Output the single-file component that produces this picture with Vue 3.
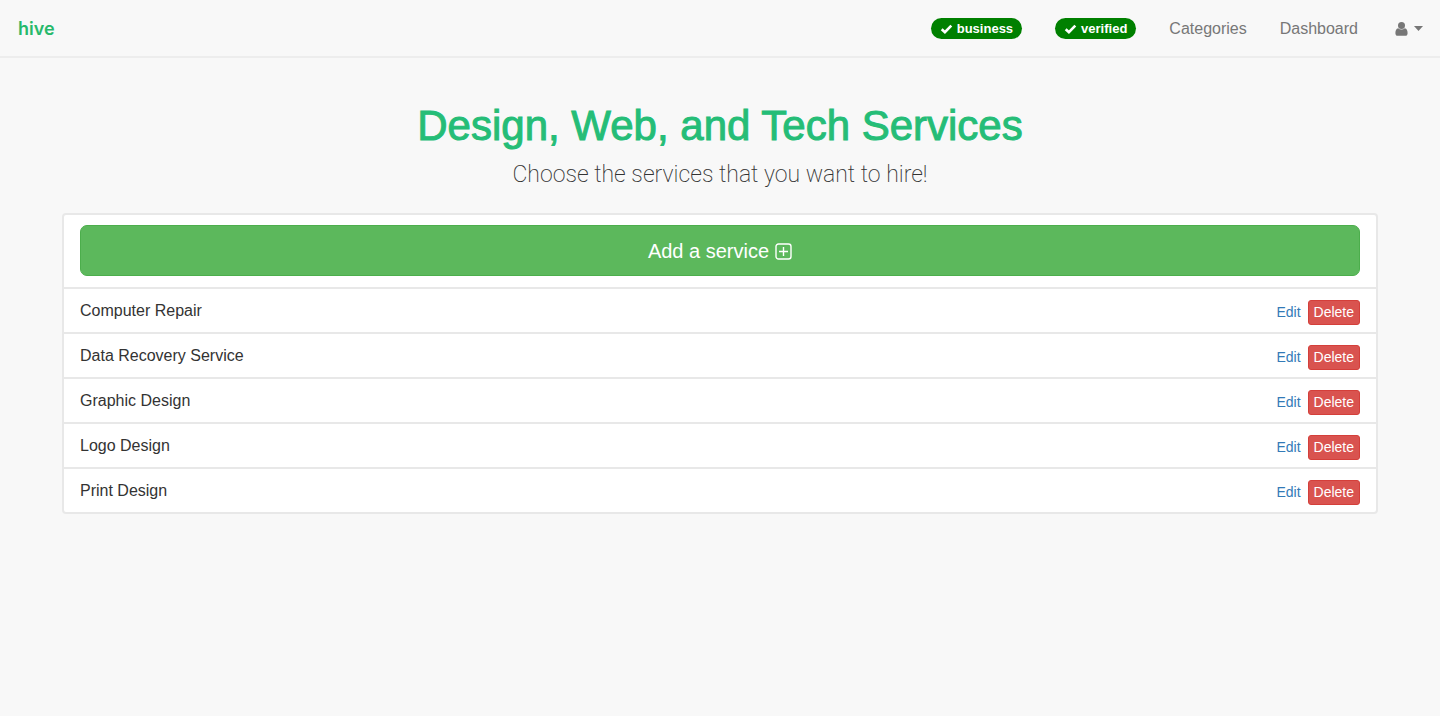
<script setup>
const badges = ['business', 'verified']
const services = [
  'Computer Repair',
  'Data Recovery Service',
  'Graphic Design',
  'Logo Design',
  'Print Design',
]
</script>

<template>
  <div class="page">
    <nav class="navbar">
      <a href="#" class="brand">hive</a>
      <div class="nav-items">
        <span v-for="badge in badges" :key="badge" class="badge">
          <svg class="check" viewBox="0 0 12 10" aria-hidden="true">
            <path d="M1.2 5.2 4.4 8.2 10.8 1.6" fill="none" stroke="currentColor" stroke-width="2.6" />
          </svg>
          {{ badge }}
        </span>
        <a href="#" class="nav-link">Categories</a>
        <a href="#" class="nav-link">Dashboard</a>
        <button type="button" class="user" aria-label="Account menu">
          <svg class="person" viewBox="0 0 13 14" aria-hidden="true">
            <path
              fill="currentColor"
              d="M3.2 6.2C1.1 6.6.4 8.5.4 11.2.4 12.9 1.3 13.8 2.7 13.8H10.3C11.7 13.8 12.6 12.9 12.6 11.2 12.6 8.5 11.9 6.6 9.8 6.2A4.6 4.6 0 0 1 3.2 6.2Z"
            />
            <circle cx="6.5" cy="3.6" r="3.5" fill="currentColor" />
          </svg>
          <svg class="caret" viewBox="0 0 9 5" aria-hidden="true">
            <path d="M0 0H9L4.5 5Z" fill="currentColor" />
          </svg>
        </button>
      </div>
    </nav>

    <main class="content">
      <h1 class="title">Design, Web, and Tech Services</h1>
      <p class="subtitle">Choose the services that you want to hire!</p>

      <ul class="list">
        <li class="add-row">
          <button type="button" class="add">
            Add a service
            <svg class="plus" viewBox="0 0 17 17" aria-hidden="true">
              <rect x="1" y="1" width="15" height="15" rx="2.5" fill="none" stroke="currentColor" stroke-width="1.4" />
              <path d="M8.5 4V13M4 8.5H13" stroke="currentColor" stroke-width="1.4" />
            </svg>
          </button>
        </li>
        <li v-for="service in services" :key="service" class="row">
          <span class="name">{{ service }}</span>
          <span class="actions">
            <a href="#" class="edit">Edit</a>
            <button type="button" class="delete">Delete</button>
          </span>
        </li>
      </ul>
    </main>
  </div>
</template>

<style>
body {
  background: #f8f8f8;
}
</style>

<style scoped>
.page {
  font-family: "Liberation Sans", Arial, sans-serif;
  font-size: 16px;
  line-height: 24px;
  color: #333;
}

button {
  font-family: inherit;
  border: 0;
  cursor: pointer;
}

a {
  text-decoration: none;
}

.navbar {
  display: flex;
  align-items: center;
  justify-content: space-between;
  height: 55px;
  padding: 1px 17px 0 18px;
  border-bottom: 2px solid #ededed;
}

.brand {
  font-family: Inter, sans-serif;
  font-size: 18px;
  font-weight: 600;
  color: #27b96b;
}

.nav-items {
  display: flex;
  align-items: center;
  gap: 33px;
}

.badge {
  display: flex;
  align-items: center;
  gap: 4px;
  height: 21px;
  padding: 0 9px;
  border-radius: 11px;
  background: #008000;
  color: #fff;
  font-size: 13px;
  font-weight: 700;
}

.check {
  width: 13px;
  height: 10px;
}

.nav-link {
  color: #777;
}

.user {
  display: flex;
  align-items: center;
  gap: 6px;
  margin-left: 4px;
  padding: 0;
  background: none;
  color: #777;
}

.person {
  width: 13px;
  height: 14px;
}

.caret {
  width: 9px;
  height: 5px;
}

.content {
  padding: 44px 62px;
}

.title {
  margin: 0;
  font-size: 42px;
  line-height: 48px;
  font-weight: 400;
  color: #25bd77;
  -webkit-text-stroke: 1px #25bd77;
  text-align: center;
}

.subtitle {
  margin: 9px 0 0;
  font-family: Roboto, "Liberation Sans", sans-serif;
  font-size: 23px;
  line-height: 32px;
  font-weight: 200;
  text-align: center;
}

.list {
  margin: 22px 0 0;
  padding: 0;
  list-style: none;
  background: #fff;
  border: 2px solid #e8e8e8;
  border-radius: 4px;
}

.add-row {
  padding: 10px 16px 11px;
}

.add {
  display: flex;
  align-items: center;
  justify-content: center;
  gap: 6px;
  width: 100%;
  height: 51px;
  padding: 1px 0 0;
  border: 1px solid #4cae4c;
  border-radius: 7px;
  background: #5cb85c;
  color: #fff;
  font-size: 20px;
}

.plus {
  width: 17px;
  height: 17px;
}

.row {
  display: flex;
  align-items: center;
  justify-content: space-between;
  height: 43px;
  padding: 0 16px;
  border-top: 2px solid #e8e8e8;
}

.actions {
  display: flex;
  align-items: center;
  gap: 7px;
  padding-top: 3px;
  font-size: 14px;
}

.edit {
  color: #337ab7;
}

.delete {
  height: 25px;
  padding: 0 5px;
  border: 1px solid #d43f3a;
  border-radius: 3px;
  background: #d9534f;
  color: #fff;
  font-size: 14px;
}
</style>
